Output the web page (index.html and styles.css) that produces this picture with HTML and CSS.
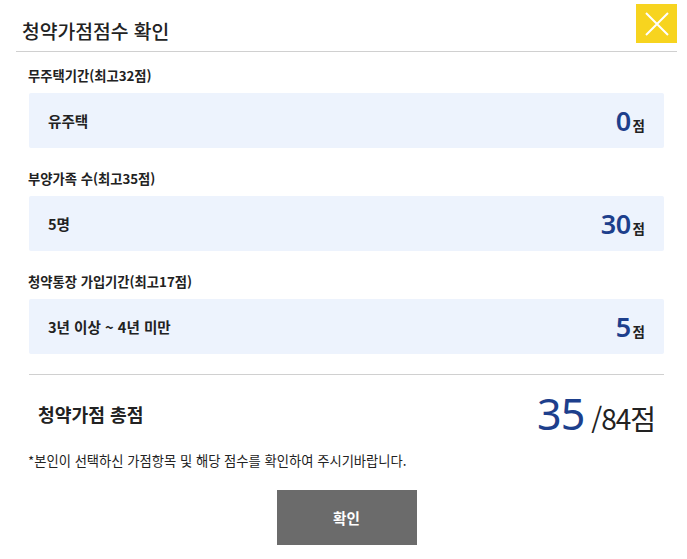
FILE: index.html
```html
<!DOCTYPE html>
<html lang="ko">
<head>
    <meta charset="UTF-8">
    <meta name="viewport" content="width=device-width, initial-scale=1.0">
    <title>청약가점점수 확인</title>
<link rel="stylesheet" href="styles.css">
</head>
<body>

    <div class="popup">
        <div class="pop-head">
            <h1>청약가점점수 확인</h1>
            <button class="closeBtn" aria-label="닫기">
                <svg width="26" height="26" viewBox="0 0 26 26">
                    <path d="M2 2 L24 24 M24 2 L2 24" stroke="#fff" stroke-width="2" fill="none"/>
                </svg>
            </button>
        </div>

        <div class="pop-body">
            <div class="score-item">
                <h2>무주택기간(최고32점)</h2>
                <div class="score-box">
                    <span class="answer">유주택</span>
                    <span class="point"><strong>0</strong>점</span>
                </div>
            </div>

            <div class="score-item">
                <h2>부양가족 수(최고35점)</h2>
                <div class="score-box">
                    <span class="answer">5명</span>
                    <span class="point"><strong>30</strong>점</span>
                </div>
            </div>

            <div class="score-item">
                <h2>청약통장 가입기간(최고17점)</h2>
                <div class="score-box">
                    <span class="answer">3년 이상 ~ 4년 미만</span>
                    <span class="point"><strong>5</strong>점</span>
                </div>
            </div>

            <div class="total">
                <h3>청약가점 총점</h3>
                <p class="total-point"><strong>35</strong> /84점</p>
            </div>

            <p class="notice">*본인이 선택하신 가점항목 및 해당 점수를 확인하여 주시기바랍니다.</p>

            <div class="btn-area">
                <button class="confirmBtn">확인</button>
            </div>
        </div>
    </div>

</body>
</html>
```

FILE: styles.css
```css
/* Basic reset */
* {
    margin: 0;
    padding: 0;
    box-sizing: border-box;
}

body {
    font-family: "Noto Sans CJK KR", "Noto Sans", sans-serif;
    background-color: #fff;
    color: #222;
}

.popup {
    width: 687px;
}

.pop-head {
    display: flex;
    justify-content: space-between;
    align-items: flex-start;
    height: 52px;
    margin: 0 10px 0 16px;
    border-bottom: 1px solid #d0d0d0;
}

.pop-head h1 {
    font-size: 19.3px;
    font-weight: 500;
    line-height: 24px;
    margin-top: 19px;
    padding-left: 6px;
}

.closeBtn {
    width: 41px;
    height: 39px;
    margin-top: 4px;
    background-color: #f7d41f;
    border: none;
    display: flex;
    align-items: center;
    justify-content: center;
    cursor: pointer;
}

.pop-body {
    padding: 13px 23px 0 29px;
}

.score-item {
    margin-bottom: 20px;
}

.score-item h2 {
    font-size: 13.3px;
    font-weight: 700;
    line-height: 22px;
    margin-left: -1px;
    margin-bottom: 6px;
}

.score-box {
    display: flex;
    justify-content: space-between;
    align-items: center;
    height: 55px;
    padding: 0 19px;
    background-color: #edf3fd;
    border-radius: 2px;
}

.answer {
    font-size: 14.6px;
    font-weight: 700;
}

.point {
    font-size: 13.5px;
    font-weight: 700;
    display: flex;
    align-items: baseline;
}

.point strong {
    font-family: "Noto Sans", sans-serif;
    font-size: 27px;
    font-weight: 600;
    color: #1d3f8c;
    margin-right: 2px;
    letter-spacing: -0.5px;
}

.total {
    display: flex;
    justify-content: space-between;
    align-items: center;
    height: 78px;
    padding: 0 9px;
    margin-top: 2px;
    border-top: 1px solid #d0d0d0;
}

.total h3 {
    font-size: 18.2px;
    font-weight: 700;
}

.total-point {
    font-size: 28px;
    font-weight: 400;
    letter-spacing: -1px;
}

.total-point strong {
    font-family: "Noto Sans", sans-serif;
    font-size: 43px;
    font-weight: 400;
    color: #1d3f8c;
}

.notice {
    font-size: 13.3px;
    line-height: 18px;
    margin-left: -1px;
}

.btn-area {
    display: flex;
    justify-content: center;
    margin-top: 20px;
}

.confirmBtn {
    width: 140px;
    height: 55px;
    background-color: #6b6b6b;
    color: white;
    font-family: inherit;
    font-size: 14.6px;
    font-weight: 700;
    border: none;
    cursor: pointer;
}
```
